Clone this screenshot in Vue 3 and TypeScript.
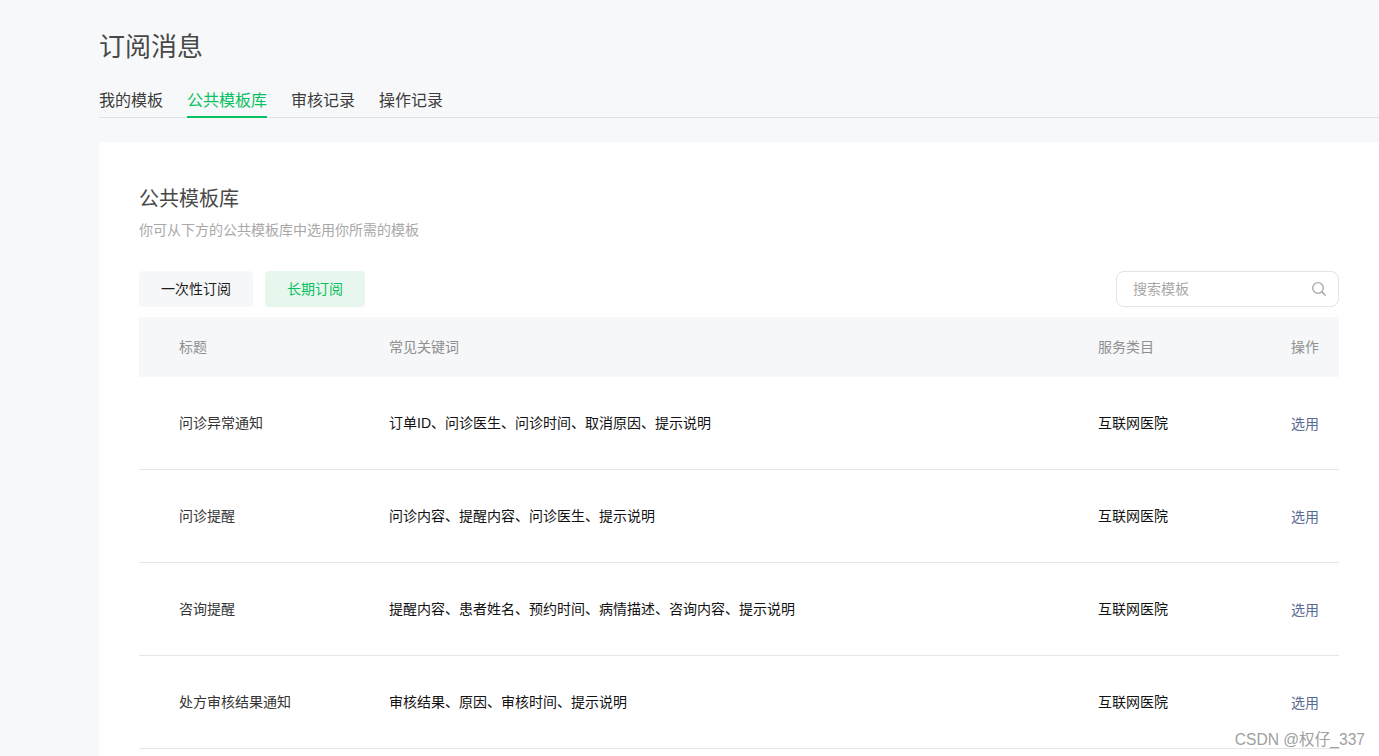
<script setup lang="ts">
const tabs = ['我的模板', '公共模板库', '审核记录', '操作记录']

const rows = [
  { title: '问诊异常通知', keywords: '订单ID、问诊医生、问诊时间、取消原因、提示说明' },
  { title: '问诊提醒', keywords: '问诊内容、提醒内容、问诊医生、提示说明' },
  { title: '咨询提醒', keywords: '提醒内容、患者姓名、预约时间、病情描述、咨询内容、提示说明' },
  { title: '处方审核结果通知', keywords: '审核结果、原因、审核时间、提示说明' },
]
</script>

<template>
  <div class="page">
    <h1 class="page-title">订阅消息</h1>
    <nav class="tabs">
      <a v-for="(tab, i) in tabs" :key="tab" class="tab" :class="{ active: i === 1 }">{{ tab }}</a>
    </nav>

    <section class="card">
      <h2 class="card-title">公共模板库</h2>
      <p class="card-desc">你可从下方的公共模板库中选用你所需的模板</p>

      <div class="toolbar">
        <button class="type-btn">一次性订阅</button>
        <button class="type-btn selected">长期订阅</button>
        <div class="search">
          <span class="search-text">搜索模板</span>
          <svg class="search-icon" width="14" height="14" viewBox="0 0 14 14" fill="none">
            <circle cx="6" cy="6" r="5.3" stroke="#a8a8a8" stroke-width="1.3" />
            <path d="M9.9 9.9L13.6 13.6" stroke="#a8a8a8" stroke-width="1.5" />
          </svg>
        </div>
      </div>

      <div class="row head">
        <span class="col-title">标题</span>
        <span class="col-keys">常见关键词</span>
        <span class="col-type">服务类目</span>
        <span class="col-op">操作</span>
      </div>
      <div v-for="row in rows" :key="row.title" class="row item">
        <span class="col-title">{{ row.title }}</span>
        <span class="col-keys">{{ row.keywords }}</span>
        <span class="col-type">互联网医院</span>
        <a class="col-op link">选用</a>
      </div>
    </section>

    <div class="watermark">CSDN @权仔_337</div>
  </div>
</template>

<style>
html,
body {
  margin: 0;
  background: #f7f8fa;
}
</style>

<style scoped>
.page {
  position: relative;
  height: 756px;
  overflow: hidden;
  box-sizing: border-box;
  padding: 25px 0 0 99px;
  background: #f7f8fa;
  font-family: "Liberation Sans", "Noto Sans CJK SC", sans-serif;
  color: #353535;
}

.page-title {
  margin: 0;
  font-size: 26px;
  line-height: 44px;
  font-weight: 400;
  color: #484848;
}

.tabs {
  display: flex;
  gap: 24px;
  margin-top: 15px;
  height: 33px;
  border-bottom: 1px solid #dfe1e4;
}

.tab {
  height: 34px;
  line-height: 34px;
  box-sizing: border-box;
  font-size: 16px;
  color: #3c3c3c;
}

.tab.active {
  color: #07c160;
  border-bottom: 2px solid #07c160;
}

.card {
  margin-top: 24px;
  height: 640px;
  padding: 40px;
  background: #fff;
  border-radius: 4px 0 0 0;
}

.card-title {
  margin: 0;
  font-size: 20px;
  line-height: 34px;
  font-weight: 400;
  color: #484848;
}

.card-desc {
  margin: 4px 0 0;
  font-size: 14px;
  line-height: 20px;
  color: #a8a8a8;
}

.toolbar {
  display: flex;
  align-items: center;
  gap: 12px;
  margin-top: 31px;
  margin-bottom: 10px;
}

.type-btn {
  height: 36px;
  padding: 0 22px 2px;
  border: 0;
  border-radius: 4px;
  font: inherit;
  font-size: 14px;
  color: #1a1a1a;
  background: #f6f7f9;
}

.type-btn.selected {
  color: #07c160;
  background: #e8f7ee;
}

.search {
  display: flex;
  align-items: center;
  justify-content: space-between;
  margin-left: auto;
  width: 223px;
  height: 36px;
  box-sizing: border-box;
  padding: 0 12px 0 16px;
  border: 1px solid #e3e3e3;
  border-radius: 8px;
}

.search-text {
  font-size: 14px;
  line-height: 18px;
  color: #a8a8a8;
}

.row {
  display: grid;
  grid-template-columns: 250px 709px 193px 1fr;
  align-items: center;
  box-sizing: border-box;
  padding-bottom: 2px;
  font-size: 14px;
  color: #111;
}

.head {
  height: 60px;
  background: #f6f7f9;
  color: #8f8f8f;
}

.item {
  height: 93px;
  border-bottom: 1px solid #e6e6e6;
}

.col-title {
  padding-left: 40px;
}

.item .col-title {
  color: #353535;
}

.link {
  padding-top: 2px;
  color: #576b95;
}

.head .col-op {
  color: #8f8f8f;
}

.watermark {
  position: absolute;
  right: 14px;
  bottom: 6px;
  font-size: 15.6px;
  line-height: 20px;
  color: #a0a0a0;
}
</style>
